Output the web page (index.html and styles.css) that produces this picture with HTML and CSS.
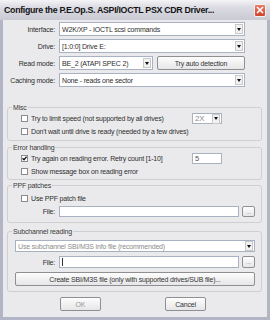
FILE: index.html
```html
<!DOCTYPE html>
<html>
  <head>
    <title>Configure the P.E.Op.S. ASPI/IOCTL PSX CDR Driver</title>
    <link rel="stylesheet" href="styles.css">
  </head>
  <body>
    <div class="window">

      <div class="titlebar">
        <span class="title">Configure the P.E.Op.S. ASPI/IOCTL PSX CDR Driver...</span>
        <span class="close">
          <svg width="8" height="8" viewBox="0 0 8 8">
            <path d="M1 1 L7 7 M7 1 L1 7" stroke="#fff" stroke-width="1.6" fill="none"/>
          </svg>
        </span>
      </div>

      <div class="dialog">

        <div class="rows">
          <div class="row">
            <span class="label">Interface:</span>
            <div class="combo"><span>W2K/XP - IOCTL scsi commands</span><span class="arrow"></span></div>
          </div>
          <div class="row">
            <span class="label">Drive:</span>
            <div class="combo"><span>[1:0:0] Drive E:</span><span class="arrow"></span></div>
          </div>
          <div class="row">
            <span class="label">Read mode:</span>
            <div class="combo combo-short"><span>BE_2 (ATAPI SPEC 2)</span><span class="arrow"></span></div>
            <div class="button button-detect">Try auto detection</div>
          </div>
          <div class="row">
            <span class="label">Caching mode:</span>
            <div class="combo"><span>None - reads one sector</span><span class="arrow"></span></div>
          </div>
        </div>

        <fieldset class="group group-misc">
          <legend>Misc</legend>
          <div class="group-body">
            <div class="check-row">
              <div class="check-label"><span class="check"></span>Try to limit speed (not supported by all drives)</div>
              <div class="combo combo-speed disabled"><span>2X</span><span class="arrow"></span></div>
            </div>
            <div class="check-row">
              <div class="check-label check-long"><span class="check"></span>Don't wait until drive is ready (needed by a few drives)</div>
            </div>
          </div>
        </fieldset>

        <fieldset class="group group-error">
          <legend>Error handling</legend>
          <div class="group-body">
            <div class="check-row">
              <div class="check-label">
                <span class="check">
                  <svg width="5" height="5" viewBox="0 0 5 5">
                    <path d="M0.5 2.3 L2 3.8 L4.6 0.8" stroke="#111" stroke-width="1.3" fill="none"/>
                  </svg>
                </span>Try again on reading error. Retry count [1-10]
              </div>
              <div class="input input-retry">5</div>
            </div>
            <div class="check-row">
              <div class="check-label check-long"><span class="check"></span>Show message box on reading error</div>
            </div>
          </div>
        </fieldset>

        <fieldset class="group group-ppf">
          <legend>PPF patches</legend>
          <div class="group-body">
            <div class="check-row">
              <div class="check-label"><span class="check"></span>Use PPF patch file</div>
            </div>
            <div class="file-row">
              <span class="file-label">File:</span>
              <div class="input input-file"></div>
              <div class="button browse">...</div>
            </div>
          </div>
        </fieldset>

        <fieldset class="group group-wide group-sub">
          <legend>Subchannel reading</legend>
          <div class="group-body">
            <div class="combo combo-wide"><span class="muted">Use subchannel SBI/M3S info file (recommended)</span><span class="arrow"></span></div>
            <div class="file-row">
              <span class="file-label">File:</span>
              <div class="input input-file"><span class="caret"></span></div>
              <div class="button browse">...</div>
            </div>
            <div class="button button-create">Create SBI/M3S file (only with supported drives/SUB file)...</div>
          </div>
        </fieldset>

        <div class="buttons">
          <div class="button button-main button-off">OK</div>
          <div class="button button-main">Cancel</div>
        </div>

      </div>
    </div>
  </body>
</html>
```

FILE: styles.css
```css
body {
    margin: 0;
    padding: 0;
    background-color: #ffffff;
    font-family: "Liberation Sans", Arial, sans-serif;
    font-size: 7px;
    letter-spacing: -0.18px;
    color: #2e2e2e;
}

.window {
    width: 270px;
    height: 320px;
    box-sizing: border-box;
    padding: 0 3px 3px;
    background-color: #b2b5c5;
    display: flex;
    flex-direction: column;
}

.titlebar {
    height: 20px;
    margin: 0 -3px;
    padding: 0 4px;
    display: flex;
    align-items: center;
    justify-content: space-between;
    background: linear-gradient(#f4f4f7, #dcdce3 35%, #cacad4);
}

.title {
    font-weight: bold;
    font-size: 8.8px;
    letter-spacing: -0.3px;
    color: #141414;
    white-space: nowrap;
}

.close {
    width: 12px;
    height: 13px;
    box-sizing: border-box;
    border: 1px solid #f2f2f2;
    border-radius: 2px;
    background: linear-gradient(#e97a62, #d2452c);
    display: flex;
    align-items: center;
    justify-content: center;
}

.dialog {
    flex: 1;
    background-color: #eaeaec;
    display: flex;
    flex-direction: column;
}

.rows {
    display: flex;
    flex-direction: column;
    gap: 3px;
    padding-top: 2px;
}

.row {
    height: 14px;
    display: flex;
    align-items: center;
    gap: 4px;
}

.label {
    width: 52px;
    text-align: right;
    white-space: nowrap;
}

.combo {
    width: 186px;
    height: 14px;
    box-sizing: border-box;
    padding-left: 2px;
    border: 1px solid #a9b2c2;
    background-color: #ffffff;
    display: flex;
    align-items: center;
    justify-content: space-between;
    white-space: nowrap;
}

.arrow {
    width: 8px;
    height: 10px;
    margin-right: 1px;
    box-sizing: border-box;
    border: 1px solid #c9c9c9;
    background-color: #f1f1f1;
    display: flex;
    align-items: center;
    justify-content: center;
    flex-shrink: 0;
}

.arrow::after {
    content: "";
    border-top: 3px solid #111111;
    border-left: 2.5px solid transparent;
    border-right: 2.5px solid transparent;
}

.combo-short {
    width: 94px;
}

.combo-speed {
    width: 30px;
    height: 11px;
}

.combo-wide {
    width: 100%;
    height: 12px;
}

.disabled,
.muted {
    color: #8c8c8c;
}

.disabled {
    font-size: 8px;
}

.button {
    box-sizing: border-box;
    border: 1px solid #8f8f92;
    border-radius: 2px;
    background: linear-gradient(#fdfdfd, #e6e6e8);
    display: flex;
    align-items: center;
    justify-content: center;
    color: #333333;
    white-space: nowrap;
}

.button-detect {
    width: 88px;
    height: 14px;
}

.group {
    margin: 0 5px 0 4px;
    padding: 0 6px 0 4px;
    border: 1px solid #cfcfd2;
    border-radius: 3px;
    min-inline-size: auto;
}

.group legend {
    padding: 0 1px;
    line-height: 9px;
    color: #3a3a3a;
}

.group-body {
    padding-left: 9px;
    display: flex;
    flex-direction: column;
}

.group-wide .group-body {
    padding-left: 3px;
}

.group-misc {
    margin-top: 16px;
    padding-bottom: 2px;
}

.group-error {
    margin-top: 2px;
    padding-bottom: 1px;
}

.group-ppf {
    margin-top: 1px;
    padding-bottom: 4px;
}

.group-ppf .group-body {
    padding-top: 2px;
}

.group-sub {
    margin-top: 4px;
    padding-bottom: 5px;
}

.group-sub .group-body {
    padding-top: 4px;
    gap: 4px;
}

.check-row {
    height: 13px;
    display: flex;
    align-items: center;
}

.check-label {
    width: 171px;
    display: flex;
    align-items: center;
    gap: 3px;
    white-space: nowrap;
}

.check-long {
    width: auto;
}

.check {
    width: 7px;
    height: 7px;
    box-sizing: border-box;
    border: 1px solid #8a8b8e;
    background-color: #ffffff;
    display: flex;
    align-items: center;
    justify-content: center;
    flex-shrink: 0;
}

.input {
    box-sizing: border-box;
    border: 1px solid #a9b2c2;
    background-color: #ffffff;
    display: flex;
    align-items: center;
    padding-left: 2px;
}

.input-retry {
    width: 30px;
    height: 11px;
    color: #555555;
    font-size: 7.5px;
}

.file-row {
    height: 13px;
    display: flex;
    align-items: center;
    gap: 4px;
}

.group-sub .file-row {
    height: 12px;
}

.file-label {
    width: 34px;
    text-align: right;
}

.group-wide .file-label {
    width: 40px;
}

.input-file {
    width: 180px;
    height: 11px;
}

.group-sub .input-file {
    height: 12px;
}

.caret {
    width: 1px;
    height: 8px;
    background-color: #333333;
}

.browse {
    width: 13px;
    height: 11px;
    margin-left: -1px;
    color: #777777;
    font-size: 6px;
    letter-spacing: 0;
}

.group-sub .browse {
    height: 12px;
}

.button-create {
    height: 14px;
}

.buttons {
    display: flex;
    gap: 64px;
    padding-left: 57px;
    margin-top: 5px;
}

.button-main {
    width: 41px;
    height: 14px;
}

.button-off {
    color: #9a9a9a;
}
```
